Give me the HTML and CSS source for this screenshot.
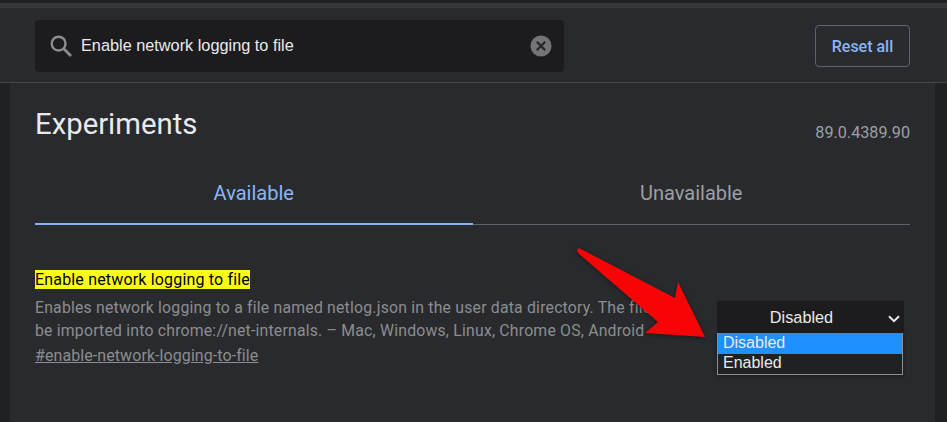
FILE: index.html
```html
<!DOCTYPE html>
<html lang="en">
<head>
<meta charset="utf-8">
<title>Experiments</title>
<link rel="stylesheet" href="styles.css">
</head>
<body>
<div class="top-strip"></div>
<header class="header">
  <div class="search">
    <svg class="search-icon" width="24" height="24" viewBox="0 0 24 24" aria-hidden="true"><circle cx="9.6" cy="9.6" r="6.9" fill="none" stroke="#8b8d90" stroke-width="2.4"/><path d="M14.6 14.6 L22 22" stroke="#8b8d90" stroke-width="2.8" fill="none"/></svg>
    <span class="search-text">Enable network logging to file</span>
    <svg class="clear-icon" width="22" height="22" viewBox="0 0 22 22" aria-hidden="true"><circle cx="11" cy="11" r="10.5" fill="#727477"/><path d="M6.8 6.8 L15.2 15.2 M15.2 6.8 L6.8 15.2" stroke="#26272a" stroke-width="2.2" fill="none"/></svg>
  </div>
  <button class="reset">Reset all</button>
</header>
<main class="main">
  <div class="title-row">
    <h1 class="title">Experiments</h1>
    <span class="version">89.0.4389.90</span>
  </div>
  <div class="tabs">
    <div class="tab tab-active">Available</div>
    <div class="tab">Unavailable</div>
  </div>
  <section class="flag">
    <div class="flag-info">
      <div class="flag-name"><mark class="hl">Enable network logging to file</mark></div>
      <p class="flag-desc">Enables network logging to a file named netlog.json in the user data directory. The file can be imported into chrome://net-internals. – Mac, Windows, Linux, Chrome OS, Android</p>
      <a class="flag-link" href="#enable-network-logging-to-file">#enable-network-logging-to-file</a>
    </div>
    <div class="select">
      <div class="select-box"><span class="select-value">Disabled</span>
        <svg class="chev" width="12" height="8" viewBox="0 0 12 8" aria-hidden="true"><path d="M1 1.2 L6 6.2 L11 1.2" fill="none" stroke="#e8eaed" stroke-width="2"/></svg>
      </div>
      <div class="select-list">
        <div class="opt opt-on">Disabled</div>
        <div class="opt">Enabled</div>
      </div>
    </div>
  </section>
</main>
<svg class="arrow" width="947" height="422" viewBox="0 0 947 422" aria-hidden="true"><path d="M579 248 Q576 250 578 253 L658 322 L645 333 L705 337 L678 282 L675 298 Z" fill="#f80404"/></svg>
</body>
</html>
```
FILE: styles.css
```css
* { box-sizing: border-box; }
html, body { margin: 0; height: 422px; overflow: hidden; }
body { background: #202124; font-family: Roboto, "Liberation Sans", sans-serif; position: relative; }
.top-strip { height: 8px; background: #35363a; border-top: 3px solid #202124; }
.header {
  height: 75px; background: #292a2d; border-bottom: 1px solid #47484b;
  display: flex; align-items: flex-start; justify-content: space-between;
  padding: 12px 37px 0 35px;
}
.search {
  width: 529px; height: 52px; background: #1c1c1e; border-radius: 4px;
  display: flex; align-items: center; padding: 0 12px 0 14px;
}
.search-icon { flex: none; margin-right: 8px; }
.search-text { flex: 1; font: 16.3px/18px "Liberation Sans", Arial, sans-serif; color: #e8eaed; padding-bottom: 2px; }
.clear-icon { flex: none; }
.reset {
  width: 95px; height: 42px; margin-top: 5px; background: transparent;
  border: 1px solid #5f6368; border-radius: 4px; color: #8ab4f8;
  font: 500 16px Roboto, sans-serif; padding: 0;
}
.main { margin: 0 12px 0 10px; height: 339px; background: #292a2d; padding: 0 25px; }
.title-row { display: flex; justify-content: space-between; align-items: flex-end; height: 59px; }
.title { margin: 0; font: 400 29.3px/38px Roboto, sans-serif; color: #e8eaed; position: relative; top: 1px; }
.version { font: 400 16.2px/20px Roboto, sans-serif; color: #9aa0a6; padding-top: 2px; transform: translateY(1px); }
.tabs { display: flex; height: 83px; align-items: flex-start; border-bottom: 1px solid #5f6368; }
.tab { flex: 1; text-align: center; font: 400 20px/24px Roboto, sans-serif; color: #9aa0a6; padding-top: 39px; height: 83px; }
.tab-active { color: #8ab4f8; border-bottom: 2px solid #8ab4f8; }
.flag { display: flex; padding-top: 45px; }
.flag-info { width: 682px; flex: none; }
.flag-name { font: 400 16px/20px Roboto, sans-serif; color: #e8eaed; height: 21px; letter-spacing: .17px; }
.hl { background: #ffff13; color: #000; padding: 0; }
.flag-desc { margin: 5px 0 4px; width: 660px; font: 400 15.8px/23px Roboto, sans-serif; letter-spacing: .2px; color: #8a8e92; height: 46px; overflow: hidden; }
.flag-link { font: 400 16px/20px Roboto, sans-serif; color: #8a8e92; letter-spacing: .08px; }
.select { width: 187px; flex: none; margin-top: 31px; font-family: "Liberation Sans", Arial, sans-serif; }
.select-box { height: 32px; background: #1c1c1e; color: #e8eaed; font-size: 16.3px; display: flex; align-items: center; justify-content: center; position: relative; padding-right: 18px; }
.chev { position: absolute; right: 4px; top: 14px; }
.select-list { width: 186px; height: 42px; border: 1px solid #8e8f91; border-top: 0; background: #202124; color: #e8eaed; font-size: 16px; box-shadow: 0 1px 4px rgba(0,0,0,.4); }
.opt { height: 20px; line-height: 18px; padding-left: 5px; }
.opt-on { background: #1e90ff; height: 21px; line-height: 20px; }
.arrow { position: absolute; left: 0; top: 0; filter: drop-shadow(0 1px 2px rgba(0,0,0,.45)); pointer-events: none; }
```
